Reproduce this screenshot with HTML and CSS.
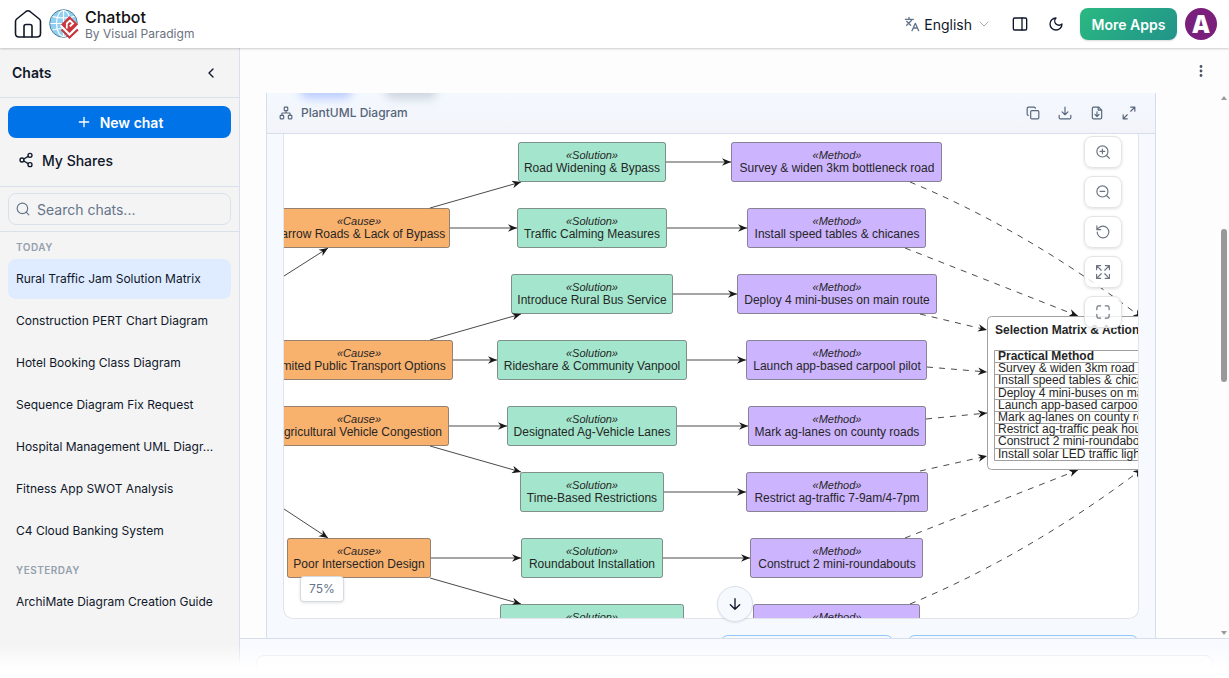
FILE: index.html
```html
<!DOCTYPE html>
<html lang="en">
<head>
<meta charset="utf-8">
<meta name="viewport" content="width=device-width, initial-scale=1">
<title>Chatbot</title>
<link rel="stylesheet" href="styles.css">
</head>
<body>
<div class="app">
  <header class="topbar">
    <a class="home" href="#" aria-label="Home">
      <svg width="28" height="30" viewBox="0 0 28 30" fill="none" stroke="#111827" stroke-width="1.600" stroke-linejoin="round" stroke-linecap="round"><path d="M1.500 12.500Q1.500 11 2.700 10L12 2.500Q14 1 16 2.500L25.300 10Q26.500 11 26.500 12.500V24.500Q26.500 28 23 28H5Q1.500 28 1.500 24.500Z"/><path d="M10 28V17.500Q10 15.500 12 15.500H16Q18 15.500 18 17.500V28"/></svg>
    </a>
    <a class="brand" href="#">
      <svg width="30" height="32" viewBox="0 0 30 32"><circle cx="14.500" cy="15.500" r="13.800" fill="#8fd0f2" stroke="#52809b" stroke-width="1"/><g fill="none" stroke="#fff" stroke-width="1.200"><ellipse cx="14.500" cy="15.500" rx="7" ry="13"/><path d="M14.500 2.500V28.500M1.500 15.500H27.500M3.500 8.500Q14.500 11.500 25.500 8.500M3.500 22Q14.500 19 25.500 22"/></g><path d="M11 18 20.500 8 30 18 20.500 29Z" fill="#fff"/><path d="M20.500 8 29 16.500 20.500 25 12 16.500Z" fill="#c9353a"/><path d="M12.500 21.500 20.500 29.500 29 21.500" fill="none" stroke="#c9353a" stroke-width="2"/><path d="M17.800 20.500V15.500L21 12.500 24 15.500 20.800 18.500" fill="none" stroke="#fff" stroke-width="1.800"/></svg>
      <span class="brand-text"><span class="brand-name">Chatbot</span><span class="brand-by">By Visual Paradigm</span></span>
    </a>
    <div class="top-actions">
      <button class="language" type="button">
        <svg class="ico muted" width="16" height="16" viewBox="0 0 24 24"><path d="M2 5h12M7.500 2v3M4 14l6-6 2-3M4 8l6 6M12 22l5-11 5 11M14 18h6"/></svg>
        <span>English</span>
        <svg class="ico pale" width="12" height="12" viewBox="0 0 12 12"><path d="m2 4 4 4 4-4"/></svg>
      </button>
      <button class="icon-btn" type="button" aria-label="Toggle panel"><svg class="ico dark" width="16" height="16" viewBox="0 0 24 24"><rect x="2" y="3" width="20" height="18" rx="2"/><path d="M15 3v18"/></svg></button>
      <button class="icon-btn" type="button" aria-label="Dark mode"><svg class="ico dark" width="16" height="16" viewBox="0 0 24 24"><path d="M12 3a6 6 0 0 0 9 9 9 9 0 1 1-9-9Z"/></svg></button>
      <button class="more-apps" type="button">More Apps</button>
      <button class="avatar" type="button">A</button>
    </div>
  </header>

  <div class="shell">
    <aside class="sidebar">
      <div class="side-head"><h2>Chats</h2><button class="icon-btn" type="button" aria-label="Collapse"><svg class="ico dark" width="16" height="16" viewBox="0 0 24 24"><path d="m15 18-6-6 6-6"/></svg></button></div>
      <div class="side-actions">
        <button class="new-chat" type="button"><svg class="ico" width="16" height="16" viewBox="0 0 24 24"><path d="M5 12h14M12 5v14"/></svg><span>New chat</span></button>
        <a class="shares" href="#"><svg class="ico dark" width="16" height="16" viewBox="0 0 24 24"><circle cx="18" cy="5" r="3"/><circle cx="6" cy="12" r="3"/><circle cx="18" cy="19" r="3"/><path d="m8.600 13.500 6.800 4M15.400 6.500l-6.800 4"/></svg><span>My Shares</span></a>
      </div>
      <div class="side-search">
        <label class="search"><svg class="ico muted" width="14" height="14" viewBox="0 0 24 24"><circle cx="11" cy="11" r="9"/><path d="m22 22-4.500-4.500"/></svg><input type="text" placeholder="Search chats..." aria-label="Search chats"></label>
      </div>
      <nav class="history">
        <h3>TODAY</h3>
        <a class="chat active" href="#">Rural Traffic Jam Solution Matrix</a>
        <a class="chat" href="#">Construction PERT Chart Diagram</a>
        <a class="chat" href="#">Hotel Booking Class Diagram</a>
        <a class="chat" href="#">Sequence Diagram Fix Request</a>
        <a class="chat" href="#">Hospital Management UML Diagr...</a>
        <a class="chat" href="#">Fitness App SWOT Analysis</a>
        <a class="chat" href="#">C4 Cloud Banking System</a>
        <h3 class="second">YESTERDAY</h3>
        <a class="chat" href="#">ArchiMate Diagram Creation Guide</a>
      </nav>
    </aside>

    <main class="main">
      <div class="main-head"><button class="icon-btn" type="button" aria-label="More options"><svg width="16" height="16" viewBox="0 0 16 16" fill="#475569"><circle cx="8" cy="3.500" r="1.400"/><circle cx="8" cy="8" r="1.400"/><circle cx="8" cy="12.500" r="1.400"/></svg></button></div>
      <div class="scroller">
        <section class="card">
          <div class="card-head">
            <svg class="ico slate" width="14" height="14" viewBox="0 0 24 24"><rect x="16" y="16" width="6" height="6" rx="1"/><rect x="2" y="16" width="6" height="6" rx="1"/><rect x="9" y="2" width="6" height="6" rx="1"/><path d="M5 16v-3a1 1 0 0 1 1-1h12a1 1 0 0 1 1 1v3M12 12V8"/></svg>
            <h3>PlantUML Diagram</h3>
            <div class="card-tools">
              <button type="button" aria-label="Copy"><svg class="ico slate" width="14" height="14" viewBox="0 0 24 24"><rect x="8" y="8" width="14" height="14" rx="2"/><path d="M4 16c-1.100 0-2-.9-2-2V4c0-1.100.9-2 2-2h10c1.100 0 2 .9 2 2"/></svg></button>
              <button type="button" aria-label="Download"><svg class="ico slate" width="14" height="14" viewBox="0 0 24 24"><path d="M2 16v4a2 2 0 0 0 2 2h16a2 2 0 0 0 2-2v-4M7 10l5 5 5-5M12 15V2"/></svg></button>
              <button type="button" aria-label="Download file"><svg class="ico slate" width="14" height="14" viewBox="0 0 24 24"><path d="M15 2H6a2 2 0 0 0-2 2v16a2 2 0 0 0 2 2h12a2 2 0 0 0 2-2V7ZM14 2v5h6M12 18v-8M8.500 14.500 12 18l3.500-3.500"/></svg></button>
              <button type="button" aria-label="Expand"><svg class="ico slate" width="14" height="14" viewBox="0 0 24 24"><path d="M15 2h7v7M9 22H2v-7M22 2l-7 7M2 22l7-7"/></svg></button>
            </div>
          </div>
          <div class="card-body">
            <div class="viewport">
              <svg class="diagram" width="1000" height="484" viewBox="284 134 1000 484">
                <defs><marker id="tip" viewBox="0 0 9 8" markerWidth="9" markerHeight="8" refX="9" refY="4" orient="auto" markerUnits="userSpaceOnUse"><path d="M9 4 0 .2 2.800 4 0 7.800Z" fill="#181818"/></marker></defs>
                <g class="link">
                  <path d="M430 208 521 182"/><path d="M450 228H517"/><path d="M284 276 328 248"/><path d="M430 340 521 314"/><path d="M453 360H497"/><path d="M449 426H507"/><path d="M430 446 521 472"/><path d="M284 509 328 538"/><path d="M431 558H521"/><path d="M430 578 521 604"/>
                  <path d="M666 162H731"/><path d="M667 228H747"/><path d="M673 294H737"/><path d="M687 360H746"/><path d="M677 426H748"/><path d="M664 492H746"/><path d="M663 558H750"/>
                </g>
                <g class="link dashed">
                  <path d="M910 182C980 211 1060 255 1142 318"/><path d="M905 248 1078 316"/><path d="M920 314 987 330"/><path d="M927 367 987 372"/><path d="M926 419 987 413"/><path d="M920 471 987 456"/><path d="M905 538 1078 470"/><path d="M910 604C980 575 1060 531 1142 469"/>
                </g>
                <g class="node cause">
                  <rect x="268.500" y="208.500" width="181" height="39" rx="2"/><rect x="266.500" y="340.500" width="186" height="39" rx="2"/><rect x="268.500" y="406.500" width="180" height="39" rx="2"/><rect x="287.500" y="538.500" width="143" height="39" rx="2"/>
                </g>
                <g class="node solution">
                  <rect x="518.500" y="142.500" width="147" height="39" rx="2"/><rect x="517.500" y="208.500" width="149" height="39" rx="2"/><rect x="511.500" y="274.500" width="161" height="39" rx="2"/><rect x="497.500" y="340.500" width="189" height="39" rx="2"/><rect x="507.500" y="406.500" width="169" height="39" rx="2"/><rect x="520.500" y="472.500" width="143" height="39" rx="2"/><rect x="521.500" y="538.500" width="141" height="39" rx="2"/><rect x="500.500" y="604.500" width="183" height="39" rx="2"/>
                </g>
                <g class="node method">
                  <rect x="731.500" y="142.500" width="210" height="39" rx="2"/><rect x="747.500" y="208.500" width="178" height="39" rx="2"/><rect x="737.500" y="274.500" width="199" height="39" rx="2"/><rect x="746.500" y="340.500" width="180" height="39" rx="2"/><rect x="748.500" y="406.500" width="177" height="39" rx="2"/><rect x="746.500" y="472.500" width="181" height="39" rx="2"/><rect x="750.500" y="538.500" width="172" height="39" rx="2"/><rect x="753.500" y="604.500" width="166" height="39" rx="2"/>
                </g>
                <g class="stereo">
                  <text x="359" y="225">«Cause»</text><text x="359" y="357">«Cause»</text><text x="359" y="423">«Cause»</text><text x="359" y="555">«Cause»</text>
                  <text x="592" y="159">«Solution»</text><text x="592" y="225">«Solution»</text><text x="592" y="291">«Solution»</text><text x="592" y="357">«Solution»</text><text x="592" y="423">«Solution»</text><text x="592" y="489">«Solution»</text><text x="592" y="555">«Solution»</text><text x="592" y="621">«Solution»</text>
                  <text x="837" y="159">«Method»</text><text x="837" y="225">«Method»</text><text x="837" y="291">«Method»</text><text x="837" y="357">«Method»</text><text x="837" y="423">«Method»</text><text x="837" y="489">«Method»</text><text x="837" y="555">«Method»</text><text x="837" y="621">«Method»</text>
                </g>
                <g class="label">
                  <text x="359" y="238">Narrow Roads &amp; Lack of Bypass</text><text x="359" y="370">Limited Public Transport Options</text><text x="359" y="436">Agricultural Vehicle Congestion</text><text x="359" y="568">Poor Intersection Design</text>
                  <text x="592" y="172">Road Widening &amp; Bypass</text><text x="592" y="238">Traffic Calming Measures</text><text x="592" y="304">Introduce Rural Bus Service</text><text x="592" y="370">Rideshare &amp; Community Vanpool</text><text x="592" y="436">Designated Ag-Vehicle Lanes</text><text x="592" y="502">Time-Based Restrictions</text><text x="592" y="568">Roundabout Installation</text>
                  <text x="837" y="172">Survey &amp; widen 3km bottleneck road</text><text x="837" y="238">Install speed tables &amp; chicanes</text><text x="837" y="304">Deploy 4 mini-buses on main route</text><text x="837" y="370">Launch app-based carpool pilot</text><text x="837" y="436">Mark ag-lanes on county roads</text><text x="837" y="502">Restrict ag-traffic 7-9am/4-7pm</text><text x="837" y="568">Construct 2 mini-roundabouts</text>
                </g>
                <g class="matrix">
                  <rect x="987.500" y="316.500" width="260" height="153" rx="4" fill="#fff"/>
                  <path d="M1200 350.500H994.500V460.500H1200M994.500 362.500H1200M994.500 374.500H1200M994.500 387.500H1200M994.500 399.500H1200M994.500 411.500H1200M994.500 423.500H1200M994.500 435.500H1200M994.500 448.500H1200"/>
                </g>
                <g class="cells">
                  <text class="bold" x="995" y="334">Selection Matrix &amp; Action Plan</text><text class="bold" x="998" y="360">Practical Method</text>
                  <text x="998" y="372">Survey &amp; widen 3km road</text><text x="998" y="384">Install speed tables &amp; chicanes</text><text x="998" y="397">Deploy 4 mini-buses on main</text><text x="998" y="409">Launch app-based carpool</text><text x="998" y="421">Mark ag-lanes on county roads</text><text x="998" y="433">Restrict ag-traffic peak hours</text><text x="998" y="445">Construct 2 mini-roundabouts</text><text x="998" y="458">Install solar LED traffic lights</text>
                </g>
              </svg>
              <div class="zoom-tools">
                <button type="button" aria-label="Zoom in"><svg class="ico" width="14" height="14" viewBox="0 0 24 24"><circle cx="11" cy="11" r="9.500"/><path d="m23 23-5-5M11 7v8M7 11h8"/></svg></button>
                <button type="button" aria-label="Zoom out"><svg class="ico" width="14" height="14" viewBox="0 0 24 24"><circle cx="11" cy="11" r="9.500"/><path d="m23 23-5-5M7 11h8"/></svg></button>
                <button type="button" aria-label="Reset"><svg class="ico" width="14" height="14" viewBox="0 0 24 24"><path d="M2 12a10 10 0 1 0 10-10 10.500 10.500 0 0 0-7.500 3L2 7.500M1.500 1.500v6.500h6.500"/></svg></button>
                <button type="button" aria-label="Fit"><svg class="ico" width="14" height="14" viewBox="0 0 24 24"><path d="M16 1h7v7M23 1l-8 8M8 1H1v7M1 1l8 8M1 16v7h7M1 23l8-8M23 16v7h-7M23 23l-8-8"/></svg></button>
                <button type="button" aria-label="Fullscreen"><svg class="ico" width="14" height="14" viewBox="0 0 24 24"><path d="M8 1.500H4.500a3 3 0 0 0-3 3V8M22.500 8V4.500a3 3 0 0 0-3-3H16M1.500 16v3.500a3 3 0 0 0 3 3H8M16 22.500h3.500a3 3 0 0 0 3-3V16"/></svg></button>
              </div>
              <span class="zoom-level">75%</span>
            </div>
            <div class="suggestions"><button type="button" class="suggest" aria-label="Edit diagram"></button><button type="button" class="suggest wide" aria-label="Open diagram"></button></div>
          </div>
        </section>
        <div class="scrollbar" aria-hidden="true"><span class="up"></span><span class="thumb"></span><span class="down"></span></div>
        <button class="jump" type="button" aria-label="Scroll to bottom"><svg class="ico dark" width="16" height="16" viewBox="0 0 24 24"><path d="M12 4v16M19 13l-7 7-7-7"/></svg></button>
      </div>
      <div class="composer"><textarea aria-label="Message"></textarea></div>
    </main>
  </div>
  <div class="fade"></div>
</div>
</body>
</html>
```
FILE: styles.css
```css
* { box-sizing: border-box; }
body { margin: 0; font-family: Inter, "Liberation Sans", sans-serif; color: #0f172a; background: #fdfdfd; }
button, input, textarea { font: inherit; color: inherit; }
button { padding: 0; border: 0; background: none; }
a { color: inherit; text-decoration: none; }
h2, h3 { margin: 0; }
svg { display: block; flex: none; }
.ico { fill: none; stroke: currentColor; stroke-width: 2; stroke-linecap: round; stroke-linejoin: round; }
.muted { color: #64748b; }
.pale { color: #a8b0bd; stroke-width: 1; }
.dark { color: #0f172a; }
.slate { color: #566579; }

.app { position: relative; display: flex; flex-direction: column; height: 100vh; overflow: hidden; }
.topbar { z-index: 2; flex: none; display: flex; align-items: center; height: 48px; padding: 0 12px 0 14px; background: #fff; box-shadow: 0 1px 2px rgba(0, 0, 0, .2); }
.brand { display: flex; align-items: center; gap: 6px; margin-left: 7px; }
.brand-text { display: flex; flex-direction: column; padding-top: 2px; }
.brand-name { font-size: 16px; line-height: 18px; font-weight: 500; color: #111; }
.brand-by { font-size: 12px; line-height: 16px; color: #6b7280; }
.top-actions { display: flex; align-items: center; margin-left: auto; }
.icon-btn { display: grid; place-items: center; width: 36px; height: 32px; }
.language { display: flex; align-items: center; gap: 4px; margin-right: 12px; font-size: 14px; }
.language .pale { margin-left: 2px; }
.more-apps { width: 97px; height: 32px; margin: 0 8px 0 6px; border-radius: 8px; font-size: 14px; font-weight: 600; color: #fff; background: linear-gradient(135deg, #2ab981, #22938a); box-shadow: 0 1px 2px rgba(0, 0, 0, .15); }
.avatar { width: 32px; height: 32px; border-radius: 50%; background: #7b1f7c; color: #fff; font: 800 24px "Open Sans", sans-serif; line-height: 32px; }

.shell { flex: 1; min-height: 0; display: flex; }
.sidebar { flex: none; display: flex; flex-direction: column; width: 240px; background: #f4f4f4; border-right: 1px solid #d9e1ec; }
.side-head { display: flex; align-items: center; justify-content: space-between; height: 50px; padding: 0 10px 0 12px; border-bottom: 1px solid #d9e1ec; }
.side-head h2 { font-size: 14px; font-weight: 600; }
.side-actions { padding: 8px; border-bottom: 1px solid #d9e1ec; }
.new-chat { display: flex; align-items: center; justify-content: center; gap: 8px; width: 100%; height: 32px; border-radius: 8px; background: #0073e8; color: #fff; font-size: 14px; font-weight: 600; }
.shares { display: flex; align-items: center; gap: 8px; height: 36px; margin-top: 4px; padding-left: 10px; font-size: 14px; font-weight: 500; }
.side-search { padding: 6px 8px; border-bottom: 1px solid #d9e1ec; }
.search { display: flex; align-items: center; gap: 7px; height: 32px; padding: 0 7px; border: 1px solid #d9e1ec; border-radius: 8px; }
.search input { flex: 1; min-width: 0; padding: 0; border: 0; outline: 0; background: none; font-size: 14px; }
.search input::placeholder { color: #64748b; opacity: 1; }
.history { display: flex; flex-direction: column; gap: 2px; padding: 6px 8px; }
.history h3 { padding-left: 8px; font-size: 10px; line-height: 19px; font-weight: 600; letter-spacing: 0.5px; color: #94a0ae; }
.history .second { margin-top: 8px; }
.chat { height: 40px; padding: 0 8px; border-radius: 8px; font-size: 12px; line-height: 40px; white-space: nowrap; overflow: hidden; text-overflow: ellipsis; }
.chat.active { background: #dfecff; }

.main { flex: 1; min-width: 0; display: flex; flex-direction: column; }
.main-head { flex: none; display: flex; justify-content: flex-end; align-items: center; height: 45px; padding-right: 10px; }
.scroller { position: relative; flex: 1; min-height: 0; display: flex; gap: 64px; padding-left: 26px; overflow: hidden; }
.card { flex: 1; min-width: 0; display: flex; flex-direction: column; border: solid #d5deea; border-width: 0 1px; background: #f6faff; }
.card-head { position: relative; flex: none; display: flex; align-items: center; gap: 8px; height: 41px; padding: 0 10px 0 12px; overflow: hidden; border-bottom: 1px solid #d5deea; color: #566579; background: linear-gradient(#f4f9ff, #f2f4f9); }
.card-head::before, .card-head::after { content: ""; position: absolute; top: -16px; width: 52px; height: 22px; border-radius: 8px; filter: blur(5px); }
.card-head::before { left: 33px; background: #bccdff; }
.card-head::after { left: 118px; background: #ced5de; }
.card-head h3 { position: relative; font-size: 12px; line-height: 16px; font-weight: 500; }
.card-tools { display: flex; margin-left: auto; }
.card-tools button { display: grid; place-items: center; width: 32px; height: 32px; }
.card-body { flex: 1; min-height: 0; display: flex; flex-direction: column; gap: 16px; padding: 0 16px; }
.viewport { position: relative; flex: 1; min-height: 0; overflow: hidden; border: 1px solid #e1e5eb; border-top: 0; border-radius: 0 0 10px 10px; background: #fff; }
.suggestions { flex: none; display: flex; justify-content: flex-end; gap: 13px; height: 3px; overflow: hidden; }
.suggest { width: 174px; height: 28px; border: 1px solid #93c5fd; border-radius: 8px; }
.suggest.wide { width: 232px; }

.diagram text { font-family: "Liberation Sans", Arial, sans-serif; font-size: 12px; fill: #262626; }
.link { fill: none; stroke: #4a4a4a; stroke-width: 1; }
.link path { marker-end: url(#tip); }
.dashed { stroke-dasharray: 6 6; }
.node { stroke: rgba(24, 24, 24, .45); }
.cause { fill: #f9b16e; }
.solution { fill: #a3e6cd; }
.method { fill: #cdb4fe; }
.stereo, .label { text-anchor: middle; }
.diagram .stereo text { font-size: 11px; font-style: italic; }
.diagram .bold { font-weight: 700; }
.matrix { fill: none; stroke: #a0a0a0; }

.zoom-tools { position: absolute; top: 2px; right: 16px; display: grid; gap: 8px; }
.zoom-tools button { display: grid; place-items: center; width: 38px; height: 32px; border: 1px solid #e2e4e8; border-radius: 8px; background: rgba(255, 255, 255, .8); box-shadow: 0 1px 3px rgba(0, 0, 0, .12); color: #6b7280; }
.zoom-level { position: absolute; left: 16px; bottom: 16px; padding: 0 8px; border: 1px solid #d5dae3; border-radius: 4px; background: #fff; box-shadow: 0 1px 3px rgba(0, 0, 0, .12); font-size: 12px; line-height: 24px; color: #64748b; }

.scrollbar { flex: none; position: relative; width: 9px; }
.scrollbar span { position: absolute; left: 1px; width: 6px; }
.scrollbar .up { top: 3px; border: solid transparent; border-width: 0 3px 4px; border-bottom-color: #999; }
.scrollbar .thumb { top: 25%; height: 28%; border-radius: 3px; background: #999; }
.scrollbar .down { bottom: 3px; border: solid transparent; border-width: 4px 3px 0; border-top-color: #999; }
.jump { position: absolute; left: 50%; bottom: 16px; display: grid; place-items: center; width: 36px; height: 36px; margin-left: -18px; border: 1px solid #d9e1ec; border-radius: 50%; background: #f6faff; box-shadow: 0 1px 2px rgba(0, 0, 0, .08); }
.composer { flex: none; display: flex; height: 40px; padding: 16px 16px 0; border-top: 1px solid #d5deea; background: #f8faff; overflow: hidden; }
.composer textarea { flex: 1; height: 80px; resize: none; border: 1px solid #dfe4ec; border-radius: 8px; background: #fdfdfe; outline: 0; }
.fade { position: absolute; inset: auto 0 0; height: 34px; z-index: 3; background: linear-gradient(transparent, rgba(255, 255, 255, .95) 70%, #fff); pointer-events: none; }
```
